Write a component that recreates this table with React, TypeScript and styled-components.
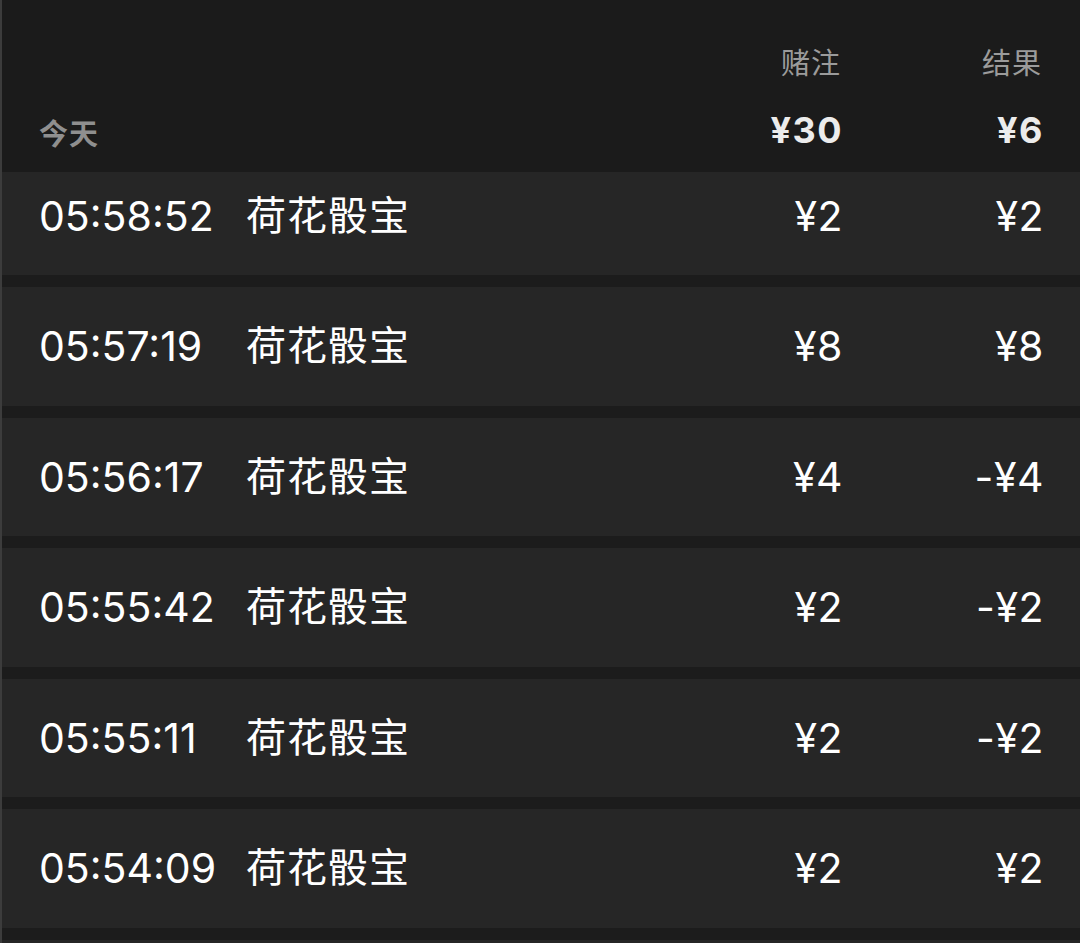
import React from "react";
import styled, { createGlobalStyle } from "styled-components";

const GlobalStyle = createGlobalStyle`
  html, body {
    margin: 0;
    padding: 0;
    background: #1c1c1c;
  }
  body {
    font-family: Inter, "Noto Sans CJK SC", sans-serif;
    -webkit-font-smoothing: antialiased;
  }
`;

const Page = styled.div`
  width: 1080px;
  height: 943px;
  overflow: hidden;
  box-sizing: border-box;
  border-left: 2px solid #3c3c3c;
  background: #1c1c1c;
  display: flex;
  flex-direction: column;
`;

const Header = styled.header`
  height: 172px;
  flex: none;
  box-sizing: border-box;
  background: #1b1b1b;
  padding: 44px 36px 20px 37px;
  display: grid;
  grid-template-columns: 1fr 200px 201px;
  grid-template-rows: 40px 44px;
  row-gap: 24px;
`;

const ColLabel = styled.div<{ $col: number }>`
  grid-row: 1;
  grid-column: ${(p) => p.$col};
  text-align: right;
  font-size: 29px;
  line-height: 40px;
  color: #9b9b9b;
  letter-spacing: 1px;
  margin-right: 2px;
`;

const DayLabel = styled.div`
  grid-row: 2;
  grid-column: 1;
  align-self: end;
  font-size: 29px;
  line-height: 34px;
  font-weight: 700;
  color: #8f8f8f;
  letter-spacing: 1px;
`;

const Total = styled.div<{ $col: number }>`
  grid-row: 2;
  grid-column: ${(p) => p.$col};
  text-align: right;
  font-size: 36px;
  line-height: 44px;
  font-weight: 700;
  color: #ececec;
  letter-spacing: 1.5px;
`;

const List = styled.div`
  display: flex;
  flex-direction: column;
  gap: 12px;
`;

const Row = styled.div<{ $clipped?: boolean }>`
  flex: none;
  box-sizing: border-box;
  height: ${(p) => (p.$clipped ? "103px" : "118.5px")};
  padding: ${(p) => (p.$clipped ? "0 36px 15.5px 37px" : "0 36px 0 37px")};
  background: #262626;
  display: grid;
  grid-template-columns: 207px 1fr 200px 201px;
  align-items: center;
  color: #ffffff;
  font-size: 41px;
  line-height: 50px;
`;

const Time = styled.span`
  letter-spacing: 0;
`;

const Name = styled.span`
  font-size: 40px;
  letter-spacing: 1px;
`;

const Money = styled.span`
  text-align: right;
  letter-spacing: 0.5px;
`;

type Bet = { time: string; game: string; stake: string; result: string };

const bets: Bet[] = [
  { time: "05:58:52", game: "荷花骰宝", stake: "¥2", result: "¥2" },
  { time: "05:57:19", game: "荷花骰宝", stake: "¥8", result: "¥8" },
  { time: "05:56:17", game: "荷花骰宝", stake: "¥4", result: "-¥4" },
  { time: "05:55:42", game: "荷花骰宝", stake: "¥2", result: "-¥2" },
  { time: "05:55:11", game: "荷花骰宝", stake: "¥2", result: "-¥2" },
  { time: "05:54:09", game: "荷花骰宝", stake: "¥2", result: "¥2" },
];

export default function App() {
  return (
    <>
      <GlobalStyle />
      <Page>
        <Header>
          <ColLabel $col={2}>赌注</ColLabel>
          <ColLabel $col={3}>结果</ColLabel>
          <DayLabel>今天</DayLabel>
          <Total $col={2}>¥30</Total>
          <Total $col={3}>¥6</Total>
        </Header>
        <List>
          {bets.map((b, i) => (
            <Row key={i} $clipped={i === 0}>
              <Time>{b.time}</Time>
              <Name>{b.game}</Name>
              <Money>{b.stake}</Money>
              <Money>{b.result}</Money>
            </Row>
          ))}
          <Row aria-hidden="true" />
        </List>
      </Page>
    </>
  );
}
